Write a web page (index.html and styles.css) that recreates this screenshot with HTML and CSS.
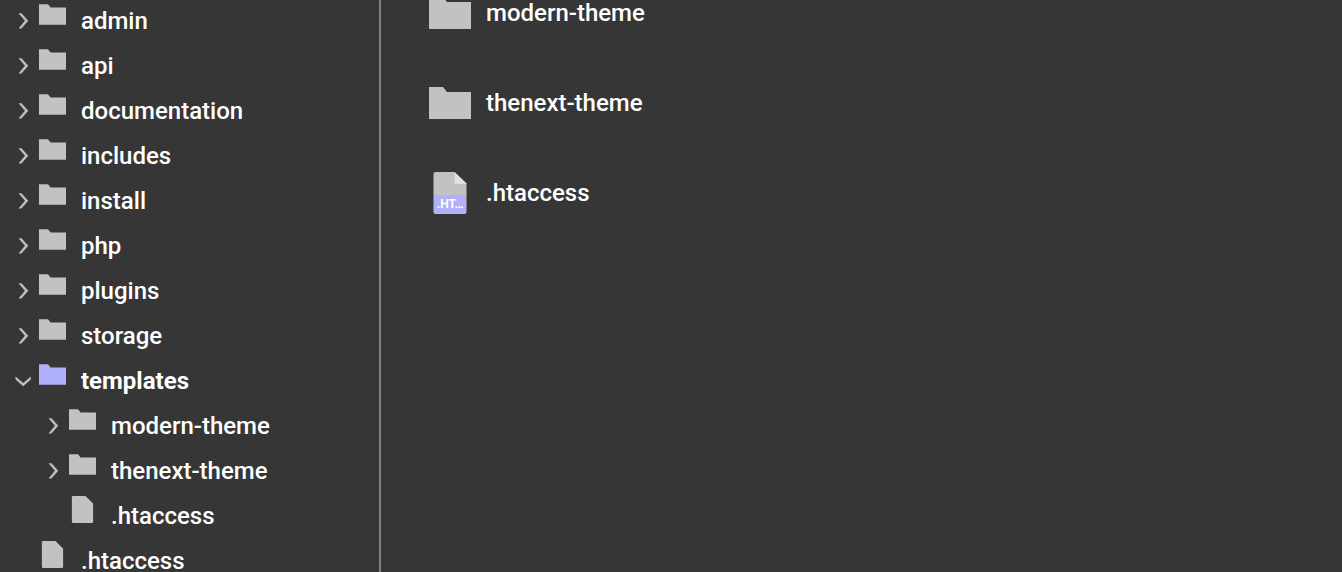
FILE: index.html
```html
<!DOCTYPE html>
<html lang="en">

<head>
    <meta charset="UTF-8">
    <title>File manager</title>
    <link rel="stylesheet" href="styles.css">
</head>

<body>
    <!-- shared icons -->
    <svg class="sprite" aria-hidden="true">
        <symbol id="chevron" viewBox="0 0 16 16">
            <path d="M4 0.4 H6.4 L13 7.8 L6.4 15.2 H4 L10.2 7.8 Z" fill="#c2c2c2" stroke="#c2c2c2" stroke-width="0.5" />
        </symbol>
        <symbol id="folder" viewBox="0 0 42 42">
            <path d="M0 5 H14 L18 10 H42 V37 H0 Z" fill="currentColor" />
        </symbol>
        <symbol id="file" viewBox="0 0 42 42">
            <path d="M6.5 0 H25.5 L37.5 11.5 V40 Q37.5 42 35.5 42 H6.5 Q4.5 42 4.5 40 V2 Q4.5 0 6.5 0 Z" fill="currentColor" />
        </symbol>
    </svg>

    <div class="manager">
        <nav class="tree">
            <ul>
                <li><button class="node" type="button"><svg class="arrow"><use href="#chevron" /></svg><svg class="icon"><use href="#folder" /></svg><span>admin</span></button></li>
                <li><button class="node" type="button"><svg class="arrow"><use href="#chevron" /></svg><svg class="icon"><use href="#folder" /></svg><span>api</span></button></li>
                <li><button class="node" type="button"><svg class="arrow"><use href="#chevron" /></svg><svg class="icon"><use href="#folder" /></svg><span>documentation</span></button></li>
                <li><button class="node" type="button"><svg class="arrow"><use href="#chevron" /></svg><svg class="icon"><use href="#folder" /></svg><span>includes</span></button></li>
                <li><button class="node" type="button"><svg class="arrow"><use href="#chevron" /></svg><svg class="icon"><use href="#folder" /></svg><span>install</span></button></li>
                <li><button class="node" type="button"><svg class="arrow"><use href="#chevron" /></svg><svg class="icon"><use href="#folder" /></svg><span>php</span></button></li>
                <li><button class="node" type="button"><svg class="arrow"><use href="#chevron" /></svg><svg class="icon"><use href="#folder" /></svg><span>plugins</span></button></li>
                <li><button class="node" type="button"><svg class="arrow"><use href="#chevron" /></svg><svg class="icon"><use href="#folder" /></svg><span>storage</span></button></li>
                <li>
                    <button class="node current" type="button" aria-expanded="true"><svg class="arrow"><use href="#chevron" /></svg><svg class="icon"><use href="#folder" /></svg><span>templates</span></button>
                    <ul>
                        <li><button class="node" type="button"><svg class="arrow"><use href="#chevron" /></svg><svg class="icon"><use href="#folder" /></svg><span>modern-theme</span></button></li>
                        <li><button class="node" type="button"><svg class="arrow"><use href="#chevron" /></svg><svg class="icon"><use href="#folder" /></svg><span>thenext-theme</span></button></li>
                        <li><button class="node" type="button"><i class="arrow"></i><svg class="icon"><use href="#file" /></svg><span>.htaccess</span></button></li>
                    </ul>
                </li>
                <li><button class="node" type="button"><i class="arrow"></i><svg class="icon"><use href="#file" /></svg><span>.htaccess</span></button></li>
            </ul>
        </nav>

        <main class="files">
            <ul>
                <li><a class="item" href="#modern-theme"><svg class="thumb"><use href="#folder" /></svg><span>modern-theme</span></a></li>
                <li><a class="item" href="#thenext-theme"><svg class="thumb"><use href="#folder" /></svg><span>thenext-theme</span></a></li>
                <li>
                    <a class="item" href="#htaccess">
                        <svg class="thumb" viewBox="0 0 42 42">
                            <use href="#file" />
                            <path d="M25.5 0 L37.5 11.5 V12 H27.5 Q25.5 12 25.5 10 Z" fill="#e0e0e0" />
                            <path d="M5 23 H37 V39.5 Q37 41.5 35 41.5 H7 Q5 41.5 5 39.5 Z" fill="#b1b1fb" />
                            <text class="ext" x="21" y="36">.HT…</text>
                        </svg>
                        <span>.htaccess</span>
                    </a>
                </li>
            </ul>
        </main>
    </div>
</body>

</html>
```

FILE: styles.css
```css
* {
    box-sizing: border-box;
    margin: 0;
    padding: 0;
}

body {
    background: #363636;
    color: #fff;
    font: 500 24px/28px Roboto, sans-serif;
}

ul {
    list-style: none;
}

.sprite {
    display: none;
}

.manager {
    display: flex;
    height: 100vh;
}

/* left: folder tree */
.tree {
    flex: 0 0 381px;
    overflow: hidden;
    border-right: 2px solid #808080;
}

/* both lists are scrolled down a little */
.tree > ul {
    margin-top: -2px;
}

.tree ul ul {
    padding-left: 30px;
}

.node {
    display: flex;
    align-items: center;
    width: 100%;
    height: 45px;
    padding-left: 15px;
    border: 0;
    background: none;
    color: inherit;
    font: inherit;
    text-align: left;
    cursor: pointer;
}

.arrow {
    width: 16px;
    height: 16px;
    margin-right: 8px;
}

.icon {
    align-self: flex-start;
    width: 27px;
    height: 27px;
    margin: 3px 15px 0 0;
    color: #c2c2c2;
}

.current {
    font-weight: 700;
}

.current .arrow {
    transform: rotate(90deg);
}

.current .icon {
    color: #b1b1fb;
}

/* right: content of the open folder */
.files {
    flex: 1;
    overflow: hidden;
}

.files > ul {
    margin-top: -32px;
}

.item {
    display: flex;
    align-items: center;
    height: 90px;
    padding-left: 48px;
    color: inherit;
    text-decoration: none;
}

.thumb {
    width: 42px;
    height: 42px;
    margin-right: 15px;
    color: #c2c2c2;
}

.ext {
    fill: #fff;
    font-size: 12px;
    font-weight: 700;
    text-anchor: middle;
}
```
